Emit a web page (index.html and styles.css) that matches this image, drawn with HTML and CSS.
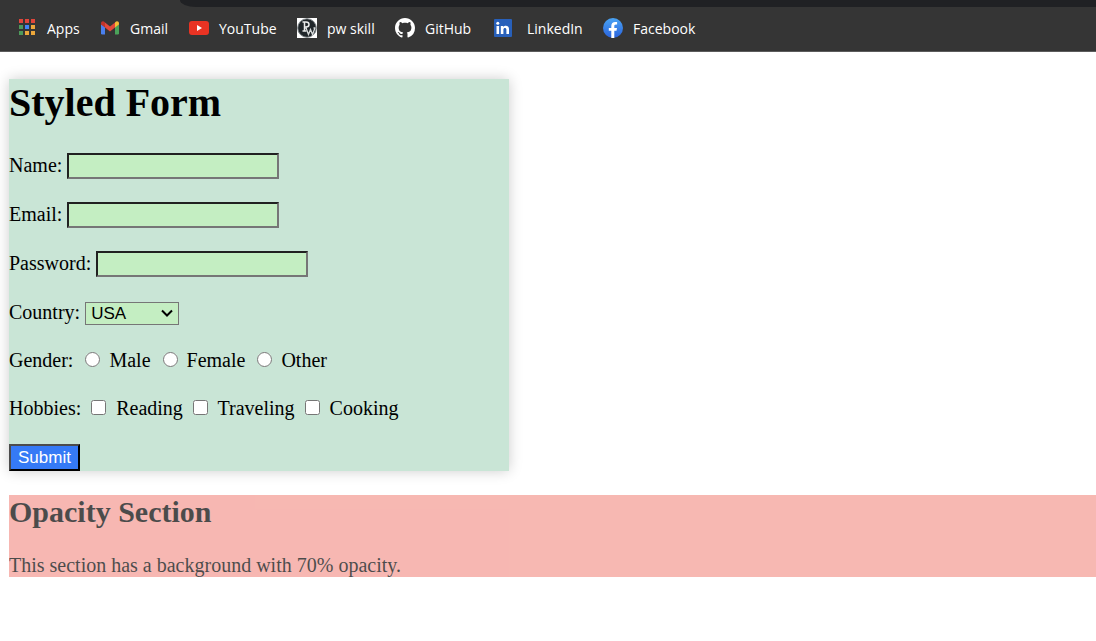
FILE: index.html
```
<!DOCTYPE html>
<html lang="en">
<head>
<meta charset="utf-8">
<title>Styled Form</title>
<link rel="stylesheet" href="styles.css">
</head>
<body>
<header class="toolbar">
  <div class="toolbar-edge"></div>
  <nav class="bookmarks">
    <a class="bookmark" href="#">
      <svg class="icon" viewBox="0 0 20 20" aria-hidden="true">
        <path fill="#e0453a" d="M2 1h4v4H2zM8 1h4v4H8zM14 1h4v4h-4z"/>
        <path fill="#4d9a5b" d="M2 7h4v4H2zM2 13h4v4H2z"/>
        <path fill="#4285f4" d="M8 7h4v4H8z"/>
        <path fill="#eca73b" d="M14 7h4v4h-4zM8 13h4v4H8zM14 13h4v4h-4z"/>
      </svg>Apps</a>
    <a class="bookmark" href="#">
      <svg class="icon" viewBox="0 0 20 20" aria-hidden="true">
        <path fill="#4a80ee" d="M1 6l4 3v7.500H2.300Q1 16.500 1 15.200z"/>
        <path fill="#4ba35a" d="M15 9l4-3v9.200q0 1.300-1.300 1.300H15z"/>
        <path fill="#e2493b" d="M5 4.500l5 4 5-4V9.500l-5 4-5-4z"/>
        <path fill="#c0342b" d="M1 5.500C1 3 3.500 2.500 5 4.500v5L1 6.500z"/>
        <path fill="#f6bb35" d="M19 5.500c0-2.500-2.500-3-4-1v5l4-3z"/>
      </svg>Gmail</a>
    <a class="bookmark" href="#">
      <svg class="icon" viewBox="0 0 20 20" aria-hidden="true">
        <rect x="0" y="3" width="20" height="14" rx="3" fill="#e93323"/>
        <path fill="#fff" d="M8 7l5 3-5 3z"/>
      </svg>YouTube</a>
    <a class="bookmark" href="#">
      <svg class="icon" viewBox="0 0 20 20" aria-hidden="true">
        <rect width="20" height="20" fill="#fff"/>
        <circle cx="10" cy="10" r="9.300" fill="#20262a" stroke="#83898c"/>
        <path fill="none" stroke="#e9ebeb" stroke-width="1.500" d="M7.500 4v9M5.500 4h3.500c4 0 4 5 0 5H7.500M5.500 13h4"/>
        <path fill="none" stroke="#d7dada" stroke-width="1.300" d="M9 10l2.500 6.500L13.500 11.500l2 5L18 10M8 10h2M16.500 10h2"/>
      </svg>pw skill</a>
    <a class="bookmark" href="#">
      <svg class="icon" viewBox="0 0 16 16" aria-hidden="true">
        <path fill="#fff" d="M8 0C3.580 0 0 3.580 0 8c0 3.540 2.290 6.530 5.470 7.590.4.070.55-.17.55-.38 0-.19-.01-.82-.01-1.490-2.010.37-2.530-.49-2.690-.94-.09-.23-.48-.94-.82-1.130-.28-.15-.68-.52-.01-.53.63-.01 1.080.58 1.230.82.72 1.210 1.870.87 2.330.66.07-.52.28-.87.51-1.070-1.780-.2-3.640-.89-3.640-3.950 0-.87.31-1.590.82-2.150-.08-.2-.36-1.020.08-2.120 0 0 .67-.21 2.200.82.64-.18 1.320-.27 2-.27s1.360.09 2 .27c1.530-1.040 2.200-.82 2.200-.82.44 1.100.16 1.920.08 2.120.51.56.82 1.270.82 2.150 0 3.070-1.870 3.750-3.650 3.950.29.25.54.73.54 1.480 0 1.070-.01 1.930-.01 2.200 0 .21.15.46.55.38A8 8 0 0 0 16 8c0-4.420-3.580-8-8-8z"/>
      </svg>GitHub</a>
    <a class="bookmark bookmark-wide" href="#">
      <svg class="icon" viewBox="0 0 20 20" aria-hidden="true">
        <rect x="1" y="1" width="18" height="18" rx="1" fill="#2860ba"/>
        <path fill="#fff" d="M3.500 8h2.600v8H3.500z"/>
        <circle cx="4.800" cy="5.300" r="1.500" fill="#fff"/>
        <path fill="#fff" d="M7.800 8h2.500v1.100c1.400-2.200 5.700-1.800 5.700 2V16h-2.600v-4.300c0-2.300-3-2.200-3 0V16H7.800z"/>
      </svg>LinkedIn</a>
    <a class="bookmark" href="#">
      <svg class="icon" viewBox="0 0 20 20" aria-hidden="true">
        <defs><linearGradient id="blue" x2="0" y2="1"><stop stop-color="#4aa4f4"/><stop offset="1" stop-color="#2a62dc"/></linearGradient></defs>
        <circle cx="10" cy="10" r="10" fill="url(#blue)"/>
        <path fill="#fff" d="M8.300 20v-7.200H5.800V10h2.500V7.900c0-2.700 1.500-4 3.900-4 .9 0 1.900.2 1.900.2v2.300h-1.200c-1.300 0-1.600.8-1.600 1.600v2h2.700l-.5 2.800h-2.200V20z"/>
      </svg>Facebook</a>
  </nav>
</header>
<main class="page">
  <form class="form">
    <h1 class="title">Styled Form</h1>
    <div class="row"><label for="name">Name:</label> <input class="field" id="name" type="text"></div>
    <div class="row"><label for="email">Email:</label> <input class="field" id="email" type="email"></div>
    <div class="row"><label for="password">Password:</label> <input class="field" id="password" type="password"></div>
    <div class="row"><label for="country">Country:</label> <span class="select-box"><select class="select" id="country"><option>USA</option><option>Canada</option><option>Australia</option></select><svg class="arrow" viewBox="0 0 12 8" aria-hidden="true"><path d="M1 1.500l5 5 5-5" fill="none" stroke="#000" stroke-width="2"/></svg></span></div>
    <div class="row" role="radiogroup" aria-label="Gender">Gender: <input class="radio" type="radio" name="gender" id="male"> <label for="male">Male</label> <input class="radio" type="radio" name="gender" id="female"> <label for="female">Female</label> <input class="radio" type="radio" name="gender" id="other"> <label for="other">Other</label></div>
    <div class="row" role="group" aria-label="Hobbies">Hobbies: <input class="check" type="checkbox" id="reading"> <label for="reading">Reading</label> <input class="check" type="checkbox" id="traveling"> <label for="traveling">Traveling</label> <input class="check" type="checkbox" id="cooking"> <label for="cooking">Cooking</label></div>
    <button class="submit" type="button">Submit</button>
  </form>
  <section class="faded">
    <h2 class="subtitle">Opacity Section</h2>
    <p class="text">This section has a background with 70% opacity.</p>
  </section>
</main>
</body>
</html>
```
FILE: styles.css
```
* {
  box-sizing: border-box;
}

body {
  margin: 0;
  background: #fff;
  color: #000;
  font-family: "Liberation Serif", "Times New Roman", serif;
  font-size: 20px;
  line-height: 23px;
}

.toolbar {
  background: #353535;
  border-bottom: 1px solid #5c5c5c;
}

.toolbar-edge {
  height: 7px;
  margin-left: 180px;
  background: #202124;
  border-bottom-left-radius: 16px 7px;
}

.bookmarks {
  display: grid;
  grid-template-columns: 83px 89px 108px 98px 98px 110px auto;
  padding: 10px 17px 12px;
}

.bookmark {
  display: flex;
  align-items: center;
  gap: 10px;
  height: 22px;
  color: #fff;
  font-family: "Open Sans", "Noto Sans", sans-serif;
  font-size: 14px;
  text-decoration: none;
  white-space: nowrap;
}

.bookmark-wide {
  gap: 14px;
}

.icon {
  flex: none;
  width: 20px;
  height: 20px;
}

.page {
  padding: 27px 0 0 9px;
}

.form {
  display: flex;
  flex-direction: column;
  align-items: flex-start;
  gap: 23px;
  max-width: 500px;
  background: #c9e5d6;
  box-shadow: 0 0 13px rgba(0, 0, 0, 0.2);
}

.title {
  margin: 0 0 4px;
  font-size: 40px;
  line-height: 47px;
}

.row {
  line-height: 25px;
}

.field {
  width: 212px;
  height: 26px;
  margin: 0;
  padding: 2px 3px 0;
  border: 2px solid;
  border-color: #212121 #767676 #767676 #212121;
  background: #c4eec2;
  font: 17px "Liberation Sans", Arial, sans-serif;
}

.select-box {
  position: relative;
  display: inline-block;
}

.select {
  appearance: none;
  width: 94px;
  height: 23px;
  margin: 0;
  padding: 0 20px 0 5px;
  border: 1px solid #767676;
  border-radius: 0;
  background: #c4eec2;
  color: #000;
  font: 17px "Liberation Sans", Arial, sans-serif;
}

.arrow {
  position: absolute;
  top: 9px;
  right: 6px;
  width: 12px;
  height: 8px;
  pointer-events: none;
}

.radio,
.check {
  width: 15px;
  height: 15px;
  margin: 4px 4px 0 7px;
}

.check {
  margin: 4px 5px 0 5px;
}

.submit {
  height: 27px;
  padding: 0 7px;
  border: 2px solid;
  border-color: #4c4c4c #000 #000 #4c4c4c;
  background: #357af6;
  color: #fff;
  font: 17px "Liberation Sans", Arial, sans-serif;
}

.faded {
  margin-top: 24px;
  background: #f49a92;
  opacity: 0.7;
}

.subtitle {
  margin: 0 0 25px;
  font-size: 30px;
  line-height: 34px;
}

.text {
  margin: 0;
}
```
